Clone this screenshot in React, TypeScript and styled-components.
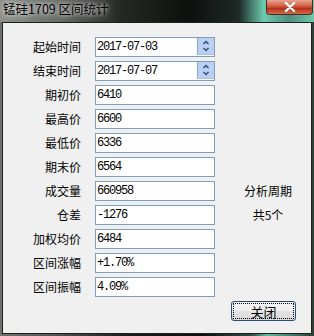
import React, { FC } from "react";
import styled, { createGlobalStyle } from "styled-components";

const GlobalStyle = createGlobalStyle`
  html, body {
    margin: 0;
    padding: 0;
    background: #1a1c1a;
  }
`;

type Field = { label: string; value: string; spin?: boolean; side?: string };

const fields: Field[] = [
  { label: "起始时间", value: "2017-07-03", spin: true },
  { label: "结束时间", value: "2017-07-07", spin: true },
  { label: "期初价", value: "6410" },
  { label: "最高价", value: "6600" },
  { label: "最低价", value: "6336" },
  { label: "期末价", value: "6564" },
  { label: "成交量", value: "660958", side: "分析周期" },
  { label: "仓差", value: "-1276", side: "共5个" },
  { label: "加权均价", value: "6484" },
  { label: "区间涨幅", value: "+1.70%" },
  { label: "区间振幅", value: "4.09%" },
];

const Spinner: FC = () => (
  <SpinBox>
    <svg width="8" height="14" viewBox="0 0 8 14">
      <path d="M1.5 5 L4 2.5 L6.5 5" fill="none" stroke="#34507d" strokeWidth="1.5" />
      <path d="M1.5 9 L4 11.5 L6.5 9" fill="none" stroke="#34507d" strokeWidth="1.5" />
    </svg>
  </SpinBox>
);

export default function App() {
  return (
    <>
      <GlobalStyle />
      <Window>
        <TitleBar>
          <Title>锰硅1709 区间统计</Title>
          <CloseButton>
            <svg width="12" height="10" viewBox="0 0 12 10">
              <path d="M2 1 L10 9 M10 1 L2 9" stroke="#ffffff" strokeWidth="2.4" strokeLinecap="round" />
            </svg>
          </CloseButton>
        </TitleBar>
        <Client>
          <Form>
            {fields.map((f) => (
              <React.Fragment key={f.label}>
                <Label>{f.label}</Label>
                <InputBox>
                  <InputText>{f.value}</InputText>
                  {f.spin && <Spinner />}
                </InputBox>
                <SideText>{f.side ?? ""}</SideText>
              </React.Fragment>
            ))}
          </Form>
          <ButtonRow>
            <DialogButton>
              <FocusRect>关闭</FocusRect>
            </DialogButton>
          </ButtonRow>
        </Client>
      </Window>
    </>
  );
}

const Window = styled.div`
  width: 314px;
  height: 336px;
  box-sizing: border-box;
  padding: 0 2px 2px;
  display: flex;
  flex-direction: column;
  background: linear-gradient(
    90deg,
    #6f726d 0%,
    #4c4f4a 20%,
    #1a1c19 40%,
    #101210 65%,
    #2f4a41 80%,
    #5fb89d 85%,
    #2e3d37 100%
  );
  font-family: "Noto Sans CJK SC", sans-serif;
`;

const TitleBar = styled.div`
  height: 22px;
  display: flex;
  justify-content: space-between;
  align-items: flex-start;
  background: linear-gradient(
    90deg,
    #8e918b 0%,
    #6a6d68 18%,
    #272925 38%,
    #0e100e 60%,
    #1d2a25 76%,
    #6ccaae 84%,
    #4f8f7e 92%,
    #6cc7ac 100%
  );
  margin: 0 -2px;
  padding: 0 1px 0 3px;
`;

const Title = styled.div`
  font-size: 12.5px;
  line-height: 18px;
  color: #000;
  text-shadow: 0 0 4px rgba(255, 255, 255, 0.9), 0 0 8px rgba(255, 255, 255, 0.6);
`;

const CloseButton = styled.div`
  width: 47px;
  height: 15px;
  box-sizing: border-box;
  border: 1px solid #4a2a24;
  border-top: none;
  border-radius: 0 0 4px 4px;
  background: linear-gradient(180deg, #e9a493 0%, #cf5a3c 45%, #b5301a 60%, #d26a4c 100%);
  display: flex;
  align-items: center;
  justify-content: center;
`;

const Client = styled.div`
  flex: 1;
  background: #f0f0f0;
  border: 1px solid #1e201d;
  display: flex;
  flex-direction: column;
`;

const Form = styled.div`
  display: grid;
  grid-template-columns: 78px 120px 1fr;
  grid-auto-rows: 20px;
  column-gap: 14px;
  row-gap: 4px;
  padding-top: 14px;
  padding-right: 4px;
`;

const Label = styled.div`
  font-size: 12px;
  line-height: 20px;
  text-align: right;
  color: #000;
`;

const InputBox = styled.div`
  display: flex;
  box-sizing: border-box;
  border: 1px solid #7f9db9;
  background: #fff;
`;

const InputText = styled.div`
  flex: 1;
  padding-left: 1px;
  font-family: "Liberation Mono", monospace;
  font-size: 12px;
  letter-spacing: -1.2px;
  line-height: 18px;
  color: #000;
`;

const SpinBox = styled.div`
  width: 16px;
  margin: 0 0 1px;
  border-left: 1px solid #8aa6cf;
  border-bottom: 1px solid #a9c0e4;
  background: #b9d0f3;
  display: flex;
  align-items: center;
  justify-content: center;
`;

const SideText = styled.div`
  font-size: 12px;
  line-height: 20px;
  text-align: center;
  color: #000;
`;

const ButtonRow = styled.div`
  display: flex;
  justify-content: flex-end;
  padding-right: 15px;
  margin-top: 4px;
`;

const DialogButton = styled.div`
  width: 65px;
  height: 20px;
  box-sizing: border-box;
  border: 1px solid #264f78;
  border-radius: 3px;
  padding: 1px;
  background: linear-gradient(180deg, #f6f6f6 0%, #eeeeee 50%, #e2e2e2 51%, #d9d9d9 100%);
`;

const FocusRect = styled.div`
  height: 100%;
  box-sizing: border-box;
  border: 1px dotted #000;
  font-size: 13px;
  line-height: 16px;
  text-align: center;
  color: #000;
`;
